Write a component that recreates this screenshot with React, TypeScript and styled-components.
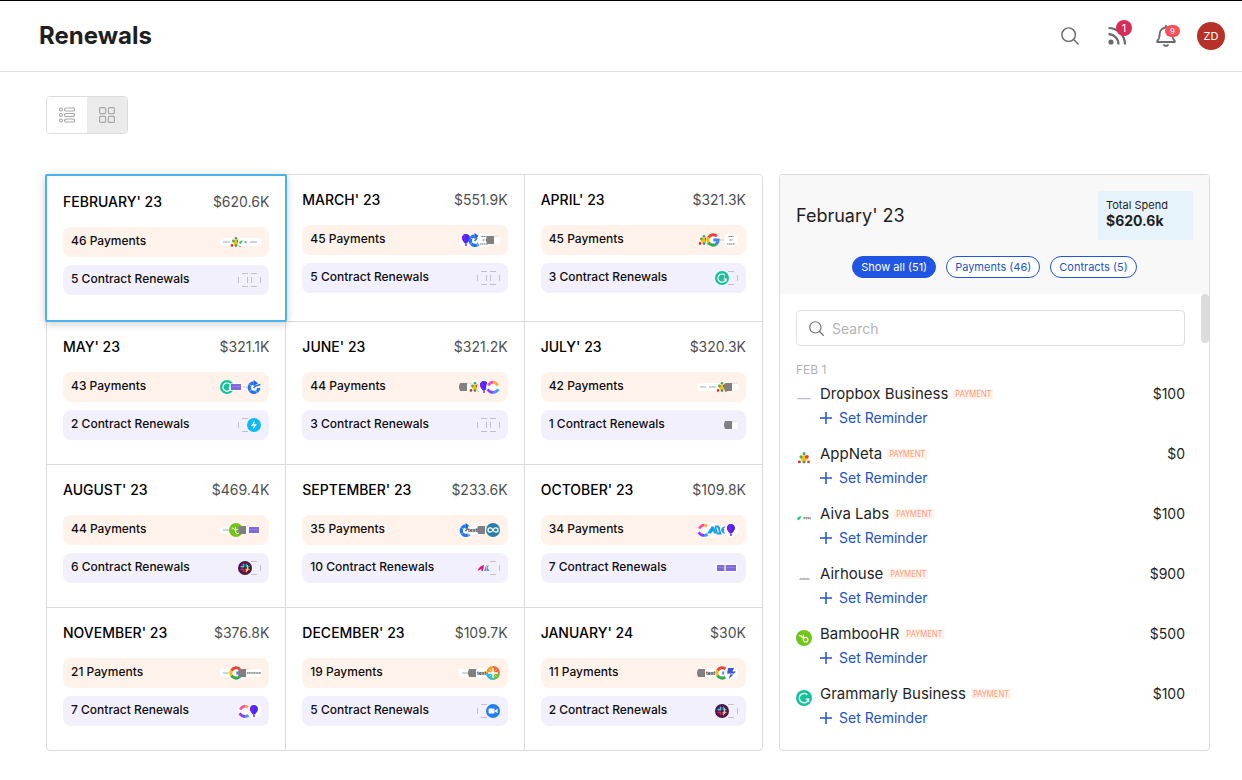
import React from "react";
import styled, { createGlobalStyle } from "styled-components";

const GlobalStyle = createGlobalStyle`
  *, *::before, *::after { box-sizing: border-box; }
  body { margin: 0; background: #fff; color: #1f1f1f; font-family: Inter, "Liberation Sans", sans-serif; }
  button, input { font: inherit; color: inherit; }
  button { cursor: pointer; }
  h1, h2, h3, p, ul { margin: 0; padding: 0; }
  ul { list-style: none; }
  svg { display: block; flex: none; }
`;

/* ---------- logos ---------- */

type Logo =
  | "line" | "dots" | "aiva" | "empty" | "balloon" | "arrow" | "block" | "google" | "none" | "note"
  | "grammarly" | "purple" | "bolt" | "bamboo" | "slack" | "clickup" | "loop" | "peak" | "wave" | "pink"
  | "zoom" | "globe" | "zap" | "test" | "caption" | "airhouse" | "dropbox";

const White = () => <circle cx="7" cy="7" r="7" fill="#fff" />;

const logoArt: Record<Logo, React.ReactNode> = {
  line: (<><rect y="3" width="14" height="8" rx="3" fill="#fff" /><path d="M3 7h7" stroke="#a9a9a9" strokeWidth="1" /></>),
  dropbox: <path d="M1 7.5h4M5 7.5h8" stroke="#b9bcc6" strokeWidth="1" />,
  airhouse: <path d="M3 8.2l1.5-1 1 .6 1.5-.8 1.5.8 1.200-.6L12 8.200z" fill="#999" stroke="#aaa" strokeWidth=".6" />,
  dots: (
    <>
      <circle cx="7" cy="3.200" r="1.300" fill="#2fae60" />
      <circle cx="7" cy="7.300" r="2.800" fill="#f2c21b" />
      <circle cx="4.400" cy="6" r="1.400" fill="#57a943" />
      <circle cx="9.500" cy="6" r="1.700" fill="#e23d2d" />
      <circle cx="3" cy="10.400" r="1.300" fill="#e02a2a" />
      <circle cx="7" cy="10.600" r="1.300" fill="#2e9d5b" />
      <circle cx="11" cy="10.400" r="1.300" fill="#e8432f" />
    </>
  ),
  aiva: (
    <>
      <rect x="0" y="3" width="14" height="8" rx="2" fill="#fff" />
      <path d="M1 8q0-2.500 4-2.500L4 7 2.500 9z" fill="#1fca6b" />
      <path d="M6.500 7.200h6.500" stroke="#999" strokeWidth="2" strokeDasharray="1.500 .3" />
    </>
  ),
  empty: <path d="M4 .5h6M4 13.500h6M.5 4v6M13.500 4v6" stroke="#c3c0cc" strokeWidth="1" fill="none" />,
  none: <path d="M5 7h6" stroke="#b8b8c8" strokeWidth="1" strokeDasharray="1.500 1" />,
  balloon: (
    <>
      <White />
      <path d="M7 1a4.200 4.200 0 0 1 4 4.200C11 7.500 8.600 9 8 10.500H6C5.400 9 3 7.500 3 5.200A4.200 4.200 0 0 1 7 1z" fill="#3d2df5" />
      <path d="M7 1a4.200 4.200 0 0 0-4 4.200C3 7.500 5.400 9 6 10.500h1z" fill="#7a1df2" />
      <path d="M6 11.200h2v1.600H6z" fill="#5b2be0" />
    </>
  ),
  arrow: (
    <>
      <circle cx="7" cy="7.500" r="3.500" fill="#fff" />
      <path d="M11.700 8A4.700 4.700 0 1 1 6.500 3" fill="none" stroke="#2476ee" strokeWidth="3.400" />
      <path d="M6.500 0l4.500 3.200-4.500 3z" fill="#1b62d8" />
      <path d="M6.500 8l2-2 5-1.500" stroke="#2476ee" strokeWidth="1.600" fill="none" />
      <path d="M2.600 4.800l2 1.200M2.500 11l2-1.500M8.500 10l1 2.500" stroke="#fff" strokeWidth=".6" />
    </>
  ),
  block: (
    <>
      <path d="M8 3h5a7 7 0 0 1 1 4 7 7 0 0 1-1 4H8z" fill="#fff" />
      <path d="M1.200 3H8v8H1.200A7 7 0 0 1 0 7a7 7 0 0 1 1.200-4z" fill="#808080" />
      <path d="M8 3.300h5" stroke="#c4c4c4" strokeWidth=".6" />
    </>
  ),
  google: (
    <>
      <White />
      <g fill="none" strokeWidth="3">
        <path d="M10.900 3.300A5.300 5.300 0 0 0 2.500 4.600" stroke="#ea4335" />
        <path d="M2.500 4.500a5.300 5.300 0 0 0 0 5" stroke="#fbbc05" />
        <path d="M2.500 9.400a5.300 5.300 0 0 0 8 1.500" stroke="#34a853" />
        <path d="M10.300 11A5 5 0 0 0 12.200 7H7.300" stroke="#4285f4" />
      </g>
    </>
  ),
  note: (
    <>
      <White />
      <path d="M4.500 3.500h5M5.500 7h3M3 11h8" stroke="#777" strokeWidth="1.200" strokeDasharray="1.600 .4" />
    </>
  ),
  grammarly: (
    <>
      <circle cx="7" cy="7" r="7" fill="#15c39a" />
      <path d="M9.900 4.200A4.100 4.100 0 1 0 11 8H8.500M11 8v2.500" fill="none" stroke="#fff" strokeWidth="1.200" />
    </>
  ),
  purple: (
    <>
      <rect x="0" y="3" width="14" height="8" rx="3" fill="#fff" opacity=".7" />
      <rect x="2" y="4" width="10" height="6" fill="#8169dc" />
      <path d="M3 6.500h8" stroke="#a08cf0" strokeWidth=".8" strokeDasharray="1.500 .6" />
    </>
  ),
  bolt: (
    <>
      <circle cx="7" cy="7" r="7" fill="#12b9f7" />
      <path d="M7.700 2.800L4 7.800h2.600l-.6 3.500 4-5H7.200z" fill="#fff" />
    </>
  ),
  bamboo: (
    <>
      <circle cx="7" cy="7" r="7" fill="#73c41d" />
      <path d="M6.400 4.200v4.300a2 2 0 1 0 2-2q-1.200 0-2 1.200M2.800 5.200q1.600-.8 2.800 1.500" fill="none" stroke="#fff" strokeWidth="1" />
    </>
  ),
  slack: (
    <>
      <circle cx="7" cy="7" r="7" fill="#4a154b" />
      <g strokeWidth="1.600" strokeLinecap="round">
        <path d="M3.200 5.600h2.600M5.600 3.200v1" stroke="#36c5f0" />
        <path d="M8.400 3.200v2.600M9.800 5.600h1" stroke="#2eb67d" />
        <path d="M8.200 8.400h2.600M8.400 9.800v1" stroke="#ecb22e" />
        <path d="M5.600 8.200v2.600M3.200 8.400h1" stroke="#e01e5a" />
      </g>
    </>
  ),
  clickup: (
    <>
      <White />
      <path d="M2.200 5.600Q4.200 2.200 7 2.200" fill="none" stroke="#ff4fa3" strokeWidth="2.800" />
      <path d="M7 2.200q2.800 0 4.800 3.400" fill="none" stroke="#ffab3d" strokeWidth="2.800" />
      <path d="M1.500 9.300Q4 12.400 7 12.400" fill="none" stroke="#8b3dff" strokeWidth="2.800" />
      <path d="M7 12.400q3 0 5.500-3.100" fill="none" stroke="#3f9cff" strokeWidth="2.800" />
    </>
  ),
  loop: (
    <>
      <circle cx="7" cy="7" r="7" fill="#277fa8" />
      <path d="M7 7C5.500 4 2 4.500 2 7s3.500 3 5 0 5-2.500 5 0-3.500 3-5 0z" fill="none" stroke="#fff" strokeWidth="1.300" />
    </>
  ),
  peak: (
    <>
      <White />
      <path d="M1 10.500L5.500 3.500H8l2.500 7H8L7 8 5 10.500z" fill="#18a0e8" />
      <path d="M10 4l2 5 2-5" stroke="#18a0e8" strokeWidth="1.600" fill="none" />
    </>
  ),
  wave: (
    <>
      <path d="M0 3.500h3l2.500 7h-3zM13 4Q8 3.500 7 7q1 3.500 6 3M8 7h5" fill="#fff" stroke="#18a0e8" strokeWidth="1.800" />
    </>
  ),
  pink: (
    <>
      <path d="M.5 10Q2 5 7 4l-1 6H4.500V8z" fill="#d8157c" />
      <path d="M7 10l2-5 3-.5-1.500 2L12.500 10H9.500z" fill="#3b9edb" />
    </>
  ),
  zoom: (
    <>
      <circle cx="7" cy="7" r="7" fill="#2380ed" />
      <rect x="2.600" y="4.600" width="6" height="4.800" rx="1" fill="#fff" />
      <path d="M9 6.500l2.500-1.700v4.400L9 7.500z" fill="#fff" />
    </>
  ),
  globe: (
    <>
      <path d="M7 0a7 7 0 0 1 7 7H7z" fill="#f26a3d" />
      <path d="M7 0a7 7 0 0 0-7 7h7z" fill="#f5a11f" />
      <path d="M0 7a7 7 0 0 0 7 7V7z" fill="#2cb8d0" />
      <path d="M14 7a7 7 0 0 1-7 7V7z" fill="#7cb83c" />
      <path d="M7 2v10M2 7h10" stroke="#fff" strokeWidth="1.400" />
      <path d="M3.500 3.500l2 2M10.500 3.500l-2 2M3.500 10.500l2-2M10.500 10.500l-2-2" stroke="#fff" strokeWidth=".8" opacity=".7" />
    </>
  ),
  zap: (
    <>
      <White />
      <path d="M4 2h6L8.500 5.500H12L5 13l1.200-5H3z" fill="#4052cf" />
      <path d="M3 8h7" stroke="#fff" strokeWidth=".8" />
    </>
  ),
  test: (
    <>
      <rect x="0" y="2" width="14" height="10" rx="3" fill="#fff" />
      <text x="0" y="9" fontSize="5" fontWeight="700" fill="#333">test</text>
    </>
  ),
  caption: (
    <>
      <rect x="0" y="3" width="14" height="8" rx="3" fill="#fff" />
      <path d="M0 7h14" stroke="#777" strokeWidth="1.400" strokeDasharray="1.300 .4" />
    </>
  ),
};

const LogoStack = styled.span`
  display: flex;
  svg + svg { margin-left: -5px; }
`;

const LogoMark = ({ name, size = 14 }: { name: Logo; size?: number }) => (
  <svg width={size} height={size} viewBox="0 0 14 14" aria-hidden="true">{logoArt[name]}</svg>
);

/* ---------- page header ---------- */

const Header = styled.header`
  display: flex;
  align-items: center;
  justify-content: space-between;
  height: 72px;
  padding: 0 17px 0 39px;
  border-top: 1px solid #000;
  border-bottom: 1px solid #e0e0e0;
`;

const PageTitle = styled.h1`
  font-size: 24px;
  line-height: 32px;
  font-weight: 700;
`;

const Actions = styled.div`
  display: flex;
  align-items: center;
  gap: 28px;
`;

const IconButton = styled.button`
  position: relative;
  display: flex;
  align-items: center;
  justify-content: center;
  width: 20px;
  height: 20px;
  padding: 0;
  border: 0;
  background: none;
  color: #6b6b6b;
`;

const Badge = styled.span<{ $small?: boolean }>`
  position: absolute;
  top: ${(p) => (p.$small ? "-1px" : "-6px")};
  right: -4px;
  width: ${(p) => (p.$small ? "15px" : "16px")};
  height: ${(p) => (p.$small ? "12px" : "16px")};
  border-radius: 8px;
  background: ${(p) => (p.$small ? "#fb5058" : "#d92b55")};
  color: #fff;
  font-size: ${(p) => (p.$small ? "8px" : "11px")};
  line-height: ${(p) => (p.$small ? "12px" : "16px")};
  text-align: center;
`;

const Avatar = styled.button`
  width: 28px;
  height: 28px;
  margin-left: -7px;
  padding: 0;
  border: 0;
  border-radius: 50%;
  background: #b5312a;
  color: #fff;
  font-size: 11px;
`;

const SearchIcon = ({ size }: { size: number }) => (
  <svg width={size} height={size} viewBox="0 0 20 20" fill="none" stroke="currentColor" strokeWidth="1.600" strokeLinecap="round">
    <circle cx="8.500" cy="8.500" r="7.500" />
    <path d="M14 14l5 5" />
  </svg>
);

const FeedIcon = () => (
  <svg width="20" height="20" viewBox="0 0 20 20" fill="none" stroke="currentColor" strokeWidth="2.200">
    <circle cx="3" cy="16" r="2.600" fill="currentColor" stroke="none" />
    <path d="M.5 8.200a10 10 0 0 1 10 10.300M.5 2a16.500 16.500 0 0 1 16.500 16.500" />
  </svg>
);

const BellIcon = () => (
  <svg width="20" height="22" viewBox="0 0 20 22" fill="none" stroke="currentColor" strokeWidth="1.800" strokeLinecap="round" strokeLinejoin="round">
    <path d="M10 .8v1.700M10 2.500a6.300 6.300 0 0 0-6.300 6.300c0 4-.8 5.700-2.500 7.200v1h17.600v-1c-1.700-1.500-2.500-3.200-2.500-7.200A6.300 6.300 0 0 0 10 2.500zM8 20q2 1.800 4 0" />
  </svg>
);

/* ---------- body ---------- */

const Main = styled.main`
  padding: 24px 32px 29px 46px;
`;

const ViewToggle = styled.div`
  display: inline-flex;
  height: 38px;
  margin-bottom: 40px;
  border: 1px solid #dcdcdc;
  border-radius: 4px;
  overflow: hidden;
  vertical-align: top;
`;

const ToggleButton = styled.button<{ $active?: boolean }>`
  display: flex;
  align-items: center;
  justify-content: center;
  width: 40px;
  padding: 0;
  border: 0;
  background: ${(p) => (p.$active ? "#ebebeb" : "#fff")};
  color: #a8a8a8;
`;

const Columns = styled.div`
  display: flex;
  align-items: stretch;
  gap: 16px;
`;

const MonthGrid = styled.section`
  flex: 5 1 0;
  min-width: 0;
  display: grid;
  grid-template-columns: repeat(3, minmax(0, 1fr));
  border: 1px solid #dadada;
  border-radius: 4px;
`;

const MonthCell = styled.article<{ $selected?: boolean }>`
  padding: 16px 16px 24px;
  border: 0 solid #dadada;
  &:not(:nth-child(3n + 1)) { border-left-width: 1px; }
  &:nth-child(n + 4) { border-top-width: 1px; }
  ${(p) =>
    p.$selected &&
    `
    position: relative;
    margin: -1px -2px;
    padding: 17px 16px 25px;
    border: 2px solid #4db2e8;
    border-radius: 2px;
    background: #fff;
    box-shadow: 0 2px 8px rgba(0, 0, 0, 0.2);
  `}
`;

const MonthHead = styled.div`
  display: flex;
  justify-content: space-between;
  margin-bottom: 16px;
  font-size: 14px;
  line-height: 18px;
`;

const MonthName = styled.h3`
  font-size: 14px;
  font-weight: 500;
  color: #000;
`;

const MonthTotal = styled.span`
  color: #4f4f4f;
`;

const CountBar = styled.div<{ $kind: "payment" | "contract" }>`
  display: flex;
  align-items: center;
  justify-content: space-between;
  height: 30px;
  padding: 0 8px;
  border-radius: 8px;
  background: ${(p) => (p.$kind === "payment" ? "#fff2eb" : "#f3f0fe")};
  & + & { margin-top: 8px; }
`;

const CountLabel = styled.span`
  padding-bottom: 2px;
  color: #0d0d0d;
  font-size: 12px;
  line-height: 16px;
  font-weight: 500;
`;

/* ---------- detail panel ---------- */

const Panel = styled.aside`
  flex: 3 1 0;
  min-width: 0;
  border: 1px solid #dadada;
  border-radius: 4px;
  overflow: hidden;
`;

const PanelHead = styled.div`
  padding: 16px;
  background: #f8f8f8;
`;

const PanelTop = styled.div`
  display: flex;
  align-items: center;
  justify-content: space-between;
  margin-bottom: 16px;
`;

const PanelTitle = styled.h2`
  font-size: 18px;
  line-height: 24px;
  font-weight: 400;
`;

const Spend = styled.div`
  width: 95px;
  height: 49px;
  padding: 6px 8px;
  background: #e6f3fb;
  font-size: 11px;
  line-height: 16px;
  strong { display: block; font-size: 14px; font-weight: 700; }
`;

const Filters = styled.div`
  display: flex;
  justify-content: center;
  gap: 10px;
`;

const Pill = styled.button<{ $active?: boolean }>`
  height: 22px;
  padding: 0 8px;
  border: 1px solid #2453d8;
  border-radius: 11px;
  background: ${(p) => (p.$active ? "#2155e6" : "#fff")};
  color: ${(p) => (p.$active ? "#fff" : "#2453c8")};
  font-size: 11px;
  line-height: 20px;
`;

const PanelBody = styled.div`
  display: flex;
`;

const PanelContent = styled.div`
  flex: 1;
  min-width: 0;
  padding: 16px 16px 0;
`;

const ScrollThumb = styled.div`
  width: 8px;
  height: 49px;
  border-radius: 4px;
  background: #dcdcdc;
`;

const SearchBox = styled.label`
  display: flex;
  align-items: center;
  gap: 8px;
  height: 36px;
  margin-bottom: 16px;
  padding: 0 12px;
  border: 1px solid #dfdfdf;
  border-radius: 4px;
  color: #707070;
`;

const SearchInput = styled.input`
  flex: 1;
  min-width: 0;
  padding: 0;
  border: 0;
  outline: 0;
  background: none;
  font-size: 14px;
  &::placeholder { color: #b5b5b5; opacity: 1; }
`;

const DateLabel = styled.p`
  margin-bottom: 6px;
  color: #b3b3b3;
  font-size: 12px;
  line-height: 16px;
`;

const Item = styled.li`
  display: grid;
  grid-template-columns: 16px minmax(0, 1fr) auto;
  column-gap: 8px;
  height: 60px;
  line-height: 20px;
  > svg { margin-top: 6px; }
`;

const ItemName = styled.div`
  display: flex;
  align-items: center;
  gap: 5px;
  margin-bottom: 4px;
  font-size: 15px;
`;

const Tag = styled.span`
  padding: 0 2px;
  background: #fff2eb;
  color: #f7a07c;
  font-family: "Noto Sans", sans-serif;
  font-size: 8px;
  line-height: 10px;
`;

const Price = styled.span`
  font-size: 14px;
`;

const ReminderButton = styled.button`
  display: flex;
  align-items: center;
  gap: 7px;
  padding: 0;
  border: 0;
  background: none;
  color: #2453c8;
  font-size: 14px;
  line-height: 20px;
`;

interface Month {
  name: string;
  total: string;
  payments: number;
  contracts: number;
  paid: Logo[];
  renewed: Logo[];
}

const months: Month[] = [
  { name: "FEBRUARY' 23", total: "$620.6K", payments: 46, contracts: 5, paid: ["line", "dots", "aiva", "line"], renewed: ["empty", "empty"] },
  { name: "MARCH' 23", total: "$551.9K", payments: 45, contracts: 5, paid: ["balloon", "arrow", "note", "block"], renewed: ["empty", "empty"] },
  { name: "APRIL' 23", total: "$321.3K", payments: 45, contracts: 3, paid: ["dots", "google", "none", "note"], renewed: ["grammarly", "empty"] },
  { name: "MAY' 23", total: "$321.1K", payments: 43, contracts: 2, paid: ["grammarly", "purple", "none", "arrow"], renewed: ["empty", "bolt"] },
  { name: "JUNE' 23", total: "$321.2K", payments: 44, contracts: 3, paid: ["block", "dots", "balloon", "clickup"], renewed: ["empty", "empty"] },
  { name: "JULY' 23", total: "$320.3K", payments: 42, contracts: 1, paid: ["line", "line", "dots", "block"], renewed: ["block"] },
  { name: "AUGUST' 23", total: "$469.4K", payments: 44, contracts: 6, paid: ["line", "bamboo", "block", "purple"], renewed: ["slack", "empty"] },
  { name: "SEPTEMBER' 23", total: "$233.6K", payments: 35, contracts: 10, paid: ["arrow", "test", "block", "loop"], renewed: ["pink", "empty"] },
  { name: "OCTOBER' 23", total: "$109.8K", payments: 34, contracts: 7, paid: ["clickup", "peak", "wave", "balloon"], renewed: ["purple", "purple"] },
  { name: "NOVEMBER' 23", total: "$376.8K", payments: 21, contracts: 7, paid: ["line", "google", "block", "caption"], renewed: ["clickup", "balloon"] },
  { name: "DECEMBER' 23", total: "$109.7K", payments: 19, contracts: 5, paid: ["line", "block", "test", "globe"], renewed: ["empty", "zoom"] },
  { name: "JANUARY' 24", total: "$30K", payments: 11, contracts: 2, paid: ["block", "test", "google", "zap"], renewed: ["slack", "empty"] },
];

const items: { name: string; price: string; logo: Logo }[] = [
  { name: "Dropbox Business", price: "$100", logo: "dropbox" },
  { name: "AppNeta", price: "$0", logo: "dots" },
  { name: "Aiva Labs", price: "$100", logo: "aiva" },
  { name: "Airhouse", price: "$900", logo: "airhouse" },
  { name: "BambooHR", price: "$500", logo: "bamboo" },
  { name: "Grammarly Business", price: "$100", logo: "grammarly" },
];

const Stack = ({ logos }: { logos: Logo[] }) => (
  <LogoStack>
    {logos.map((l, i) => <LogoMark key={i} name={l} />)}
  </LogoStack>
);

export default function App() {
  return (
    <>
      <GlobalStyle />
      <Header>
        <PageTitle>Renewals</PageTitle>
        <Actions>
          <IconButton aria-label="Search"><SearchIcon size={18} /></IconButton>
          <IconButton aria-label="Updates"><FeedIcon /><Badge>1</Badge></IconButton>
          <IconButton aria-label="Notifications"><BellIcon /><Badge $small>9</Badge></IconButton>
          <Avatar>ZD</Avatar>
        </Actions>
      </Header>
      <Main>
        <ViewToggle>
          <ToggleButton aria-label="List view">
            <svg width="16" height="16" viewBox="0 0 16 16" fill="none" stroke="currentColor" strokeWidth="1.200">
              {[2.5, 8, 13.5].map((y) => (
                <React.Fragment key={y}>
                  <circle cx="2" cy={y} r="1.500" />
                  <rect x="5.500" y={y - 1.5} width="10" height="3" rx="1.500" />
                </React.Fragment>
              ))}
            </svg>
          </ToggleButton>
          <ToggleButton $active aria-label="Grid view">
            <svg width="16" height="16" viewBox="0 0 16 16" fill="none" stroke="currentColor" strokeWidth="1.200">
              <rect x=".6" y=".6" width="6" height="6" rx="1" />
              <rect x="9.400" y=".6" width="6" height="6" rx="1" />
              <rect x=".6" y="9.400" width="6" height="6" rx="1" />
              <rect x="9.400" y="9.400" width="6" height="6" rx="1" />
            </svg>
          </ToggleButton>
        </ViewToggle>
        <Columns>
          <MonthGrid>
            {months.map((m, i) => (
              <MonthCell key={m.name} $selected={i === 0}>
                <MonthHead>
                  <MonthName>{m.name}</MonthName>
                  <MonthTotal>{m.total}</MonthTotal>
                </MonthHead>
                <CountBar $kind="payment">
                  <CountLabel>{`${m.payments} Payments`}</CountLabel>
                  <Stack logos={m.paid} />
                </CountBar>
                <CountBar $kind="contract">
                  <CountLabel>{`${m.contracts} Contract Renewals`}</CountLabel>
                  <Stack logos={m.renewed} />
                </CountBar>
              </MonthCell>
            ))}
          </MonthGrid>
          <Panel>
            <PanelHead>
              <PanelTop>
                <PanelTitle>February' 23</PanelTitle>
                <Spend>Total Spend<strong>$620.6k</strong></Spend>
              </PanelTop>
              <Filters>
                <Pill $active>Show all (51)</Pill>
                <Pill>Payments (46)</Pill>
                <Pill>Contracts (5)</Pill>
              </Filters>
            </PanelHead>
            <PanelBody>
              <PanelContent>
                <SearchBox>
                  <SearchIcon size={15} />
                  <SearchInput type="text" placeholder="Search" aria-label="Search renewals" />
                </SearchBox>
                <DateLabel>FEB 1</DateLabel>
                <ul>
                  {items.map((it) => (
                    <Item key={it.name}>
                      <LogoMark name={it.logo} size={16} />
                      <div>
                        <ItemName>{it.name}<Tag>PAYMENT</Tag></ItemName>
                        <ReminderButton>
                          <svg width="12" height="12" viewBox="0 0 12 12" stroke="currentColor" strokeWidth="1.500"><path d="M6 0v12M0 6h12" /></svg>
                          Set Reminder
                        </ReminderButton>
                      </div>
                      <Price>{it.price}</Price>
                    </Item>
                  ))}
                </ul>
              </PanelContent>
              <ScrollThumb />
            </PanelBody>
          </Panel>
        </Columns>
      </Main>
    </>
  );
}
